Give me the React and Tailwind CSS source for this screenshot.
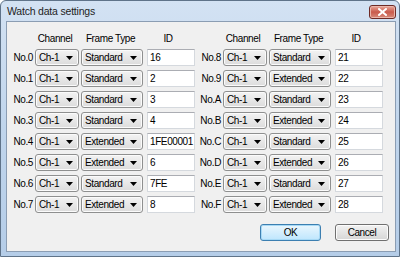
const leftRows = [
  ['0', 'Standard', '16'],
  ['1', 'Standard', '2'],
  ['2', 'Standard', '3'],
  ['3', 'Standard', '4'],
  ['4', 'Extended', '1FE00001'],
  ['5', 'Extended', '6'],
  ['6', 'Standard', '7FE'],
  ['7', 'Extended', '8'],
];

const rightRows = [
  ['8', 'Standard', '21'],
  ['9', 'Extended', '22'],
  ['A', 'Standard', '23'],
  ['B', 'Extended', '24'],
  ['C', 'Standard', '25'],
  ['D', 'Extended', '26'],
  ['E', 'Standard', '27'],
  ['F', 'Extended', '28'],
];

const Arrow = () => (
  <svg width="7" height="4" viewBox="0 0 7 4" className="shrink-0">
    <path d="M0 0h7L3.5 4z" fill="#000" />
  </svg>
);

const Combo = ({ value, width }) => (
  <div
    className={`${width} h-[17px] flex items-center justify-between pl-[3px] pr-[5px] rounded-[3px] border border-[#8e8f8f] bg-gradient-to-b from-[#f3f3f3] to-[#dcdcdc] shadow-[inset_0_0_0_1px_#fbfbfb]`}
  >
    <span>{value}</span>
    <Arrow />
  </div>
);

const Header = () => (
  <div className="flex h-[12px] items-center">
    <div className="w-[28px]" />
    <div className="w-[44px] text-center pr-[4px]">Channel</div>
    <div className="w-[62px] ml-[2px] text-center pr-[3px]">Frame Type</div>
    <div className="w-[48px] ml-[4px] text-center pr-[6px]">ID</div>
  </div>
);

const Half = ({ rows }) => (
  <div className="flex flex-col">
    <Header />
    <div className="flex flex-col gap-[4px] mt-[5px]">
      {rows.map(([n, type, id]) => (
        <div key={n} className="flex items-center">
          <div className="w-[28px] text-right pr-[2px]">No.{n}</div>
          <Combo value="Ch-1" width="w-[44px]" />
          <div className="ml-[2px]">
            <Combo value={type} width="w-[62px]" />
          </div>
          <div className="ml-[4px] w-[48px] h-[17px] flex items-center pl-[2px] overflow-hidden whitespace-nowrap bg-white border border-[#d5d9de] border-t-[#abadb3]">
            {id}
          </div>
        </div>
      ))}
    </div>
  </div>
);

export default function App() {
  return (
    <div className="w-[400px] h-[257px] flex flex-col rounded-t-[6px] border border-[#5f7389] bg-gradient-to-b from-[#d3e2f3] via-[#c0d5ec] to-[#b5cde8] font-['Liberation_Sans',Arial,sans-serif] text-[10px] tracking-[-0.4px] text-black overflow-hidden">
      <div className="h-[20px] flex items-center pl-[6px] pr-[3px] shrink-0">
        <span className="text-[10.5px] tracking-[-0.2px] text-[#1e1e1e] mt-[1px]">Watch data settings</span>
        <div className="ml-auto mt-[2px] w-[27px] h-[14px] rounded-[3px] border border-[#6e2a25] bg-gradient-to-b from-[#e9a99c] via-[#c95a4c] to-[#d88a7a] flex items-center justify-center shadow-[inset_0_0_0_1px_#eab6ab]">
          <svg width="9" height="8" viewBox="0 0 9 8">
            <path d="M1 1l7 6M8 1L1 7" stroke="#fff" strokeWidth="2" strokeLinecap="square" />
          </svg>
        </div>
      </div>
      <div className="flex-1 ml-[5px] mr-[3px] mb-[4px] bg-[#f0f0f0] border border-[#8b9db3] flex flex-col">
        <div className="flex pt-[10px]">
          <Half rows={leftRows} />
          <Half rows={rightRows} />
        </div>
        <div className="flex justify-end gap-[14px] mt-[11px] pr-[6px]">
          <div className="w-[61px] h-[17px] flex items-center justify-center rounded-[3px] border border-[#3c7fb1] bg-gradient-to-b from-[#eaf6fd] to-[#bee6fd] shadow-[inset_0_0_0_1px_#a7d9f5]">
            OK
          </div>
          <div className="w-[54px] h-[17px] flex items-center justify-center rounded-[3px] border border-[#707070] bg-gradient-to-b from-[#f2f2f2] to-[#d6d6d6] shadow-[inset_0_0_0_1px_#fcfcfc]">
            Cancel
          </div>
        </div>
      </div>
    </div>
  );
}
